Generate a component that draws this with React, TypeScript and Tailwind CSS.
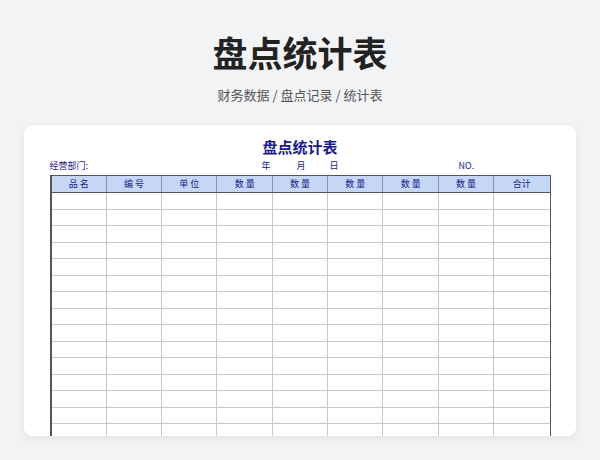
export default function App() {
  const heads = ["品 名", "编 号", "单 位", "数 量", "数 量", "数 量", "数 量", "数 量", "合计"];
  const rows = Array.from({ length: 16 });
  return (
    <div className="w-[600px] h-[460px] bg-[#f1f3f5] overflow-hidden flex flex-col items-center" style={{ fontFamily: '"Noto Sans CJK SC", "Noto Sans", sans-serif' }}>
      <div className="shrink-0 mt-[28px] text-[35px] leading-[48px] font-bold text-[#222]">盘点统计表</div>
      <div className="shrink-0 mt-[10px] text-[13px] leading-[18px] text-[#555]">财务数据 / 盘点记录 / 统计表</div>
      <div className="shrink-0 mt-[21px] w-[552px] h-[311px] bg-white rounded-[8px] shadow-[0_2px_8px_rgba(0,0,0,0.08)] overflow-hidden flex flex-col items-center">
        <div className="shrink-0 mt-[12px] text-[15px] leading-[20px] font-bold text-[#1a1a8c]">盘点统计表</div>
        <div className="shrink-0 w-[501px] h-[18px] relative text-[9px] leading-[18px] text-[#1a1a8c]">
          <span className="absolute left-0">经营部门:</span>
          <span className="absolute left-[212px]">年</span>
          <span className="absolute left-[247px]">月</span>
          <span className="absolute left-[280px]">日</span>
          <span className="absolute left-[409px]">NO.</span>
        </div>
        <div className="shrink-0 w-[501px] border-l-2 border-r border-t border-[#555]">
          <div className="grid grid-cols-9 bg-[#c5d7f5] h-[17px] border-b border-[#555]">
            {heads.map((h, i) => (
              <div key={i} className={`text-[9px] leading-[16px] text-center text-[#1a1a8c] ${i < 8 ? "border-r border-[#8a96b0]" : ""}`}>{h}</div>
            ))}
          </div>
          {rows.map((_, r) => (
            <div key={r} className="grid grid-cols-9 h-[16.5px] border-b border-[#c8c8c8]">
              {heads.map((_, i) => (
                <div key={i} className={i < 8 ? "border-r border-[#c8c8c8]" : ""} />
              ))}
            </div>
          ))}
        </div>
      </div>
    </div>
  );
}
